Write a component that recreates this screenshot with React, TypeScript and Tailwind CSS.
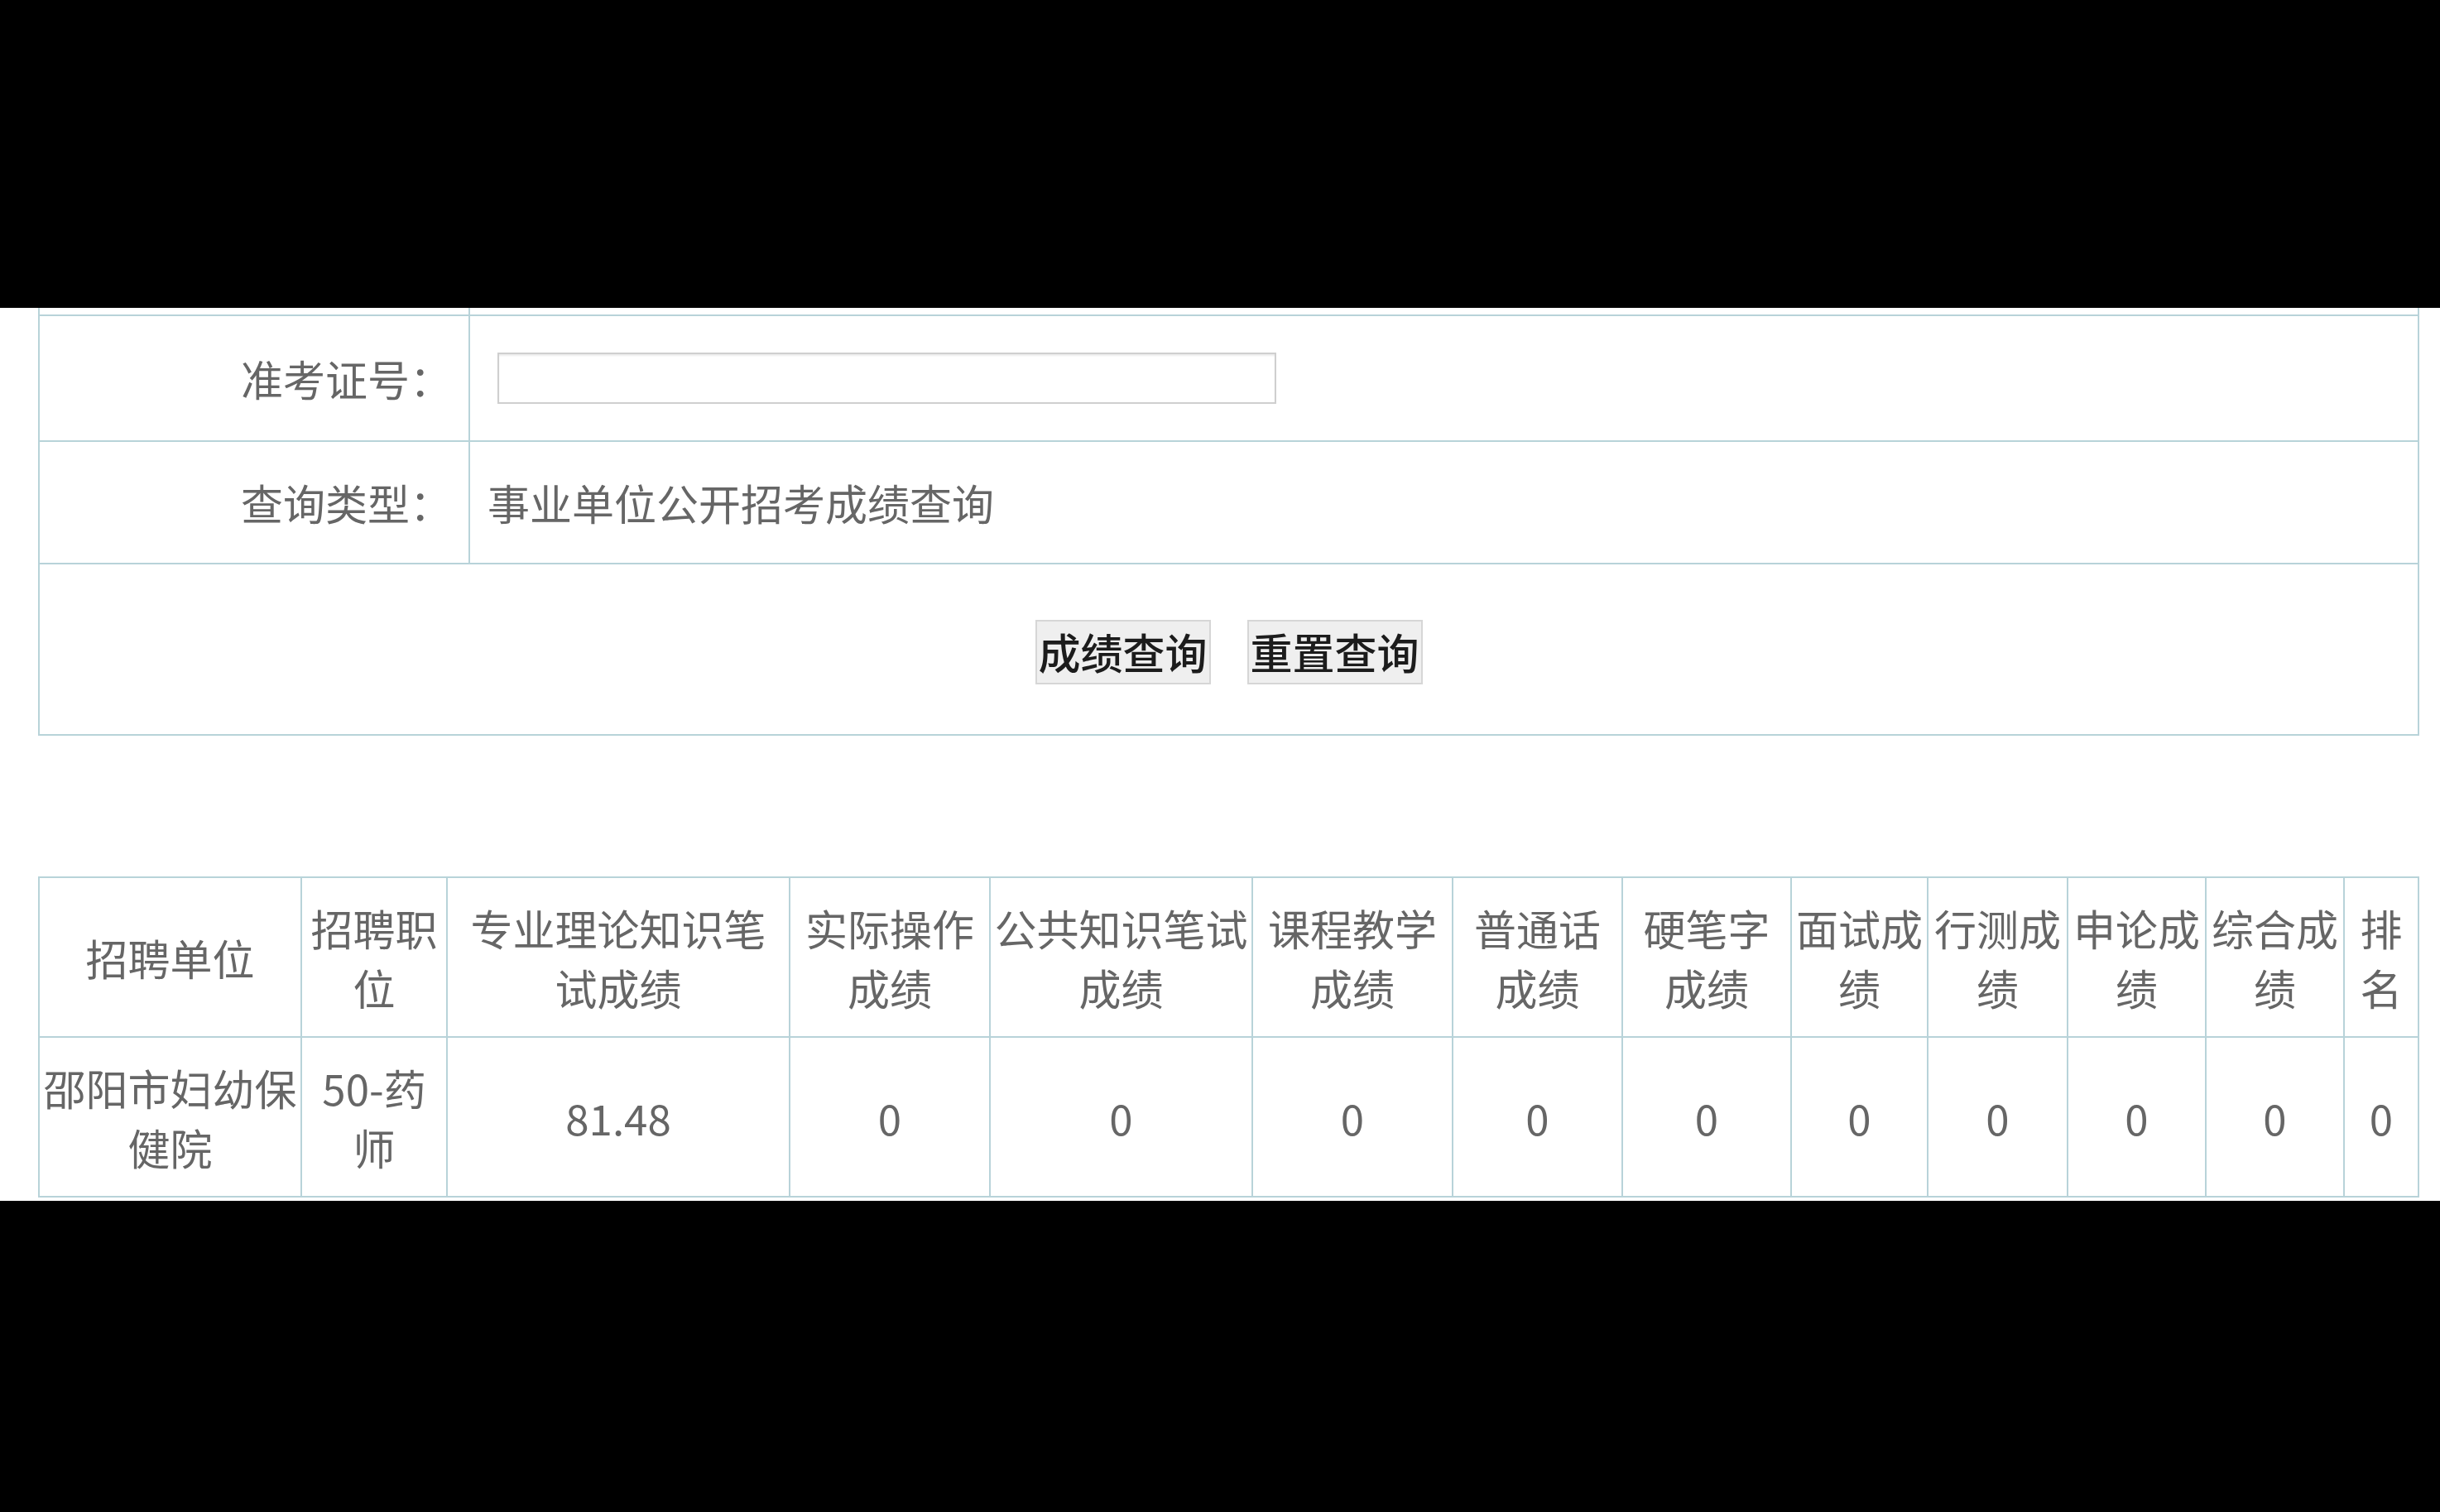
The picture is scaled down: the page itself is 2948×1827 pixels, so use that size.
const line = "border-[#b8d3d9]";

const headers: { lines: string[]; w: string }[] = [
  { lines: ["招聘单位"], w: "w-[317px]" },
  { lines: ["招聘职", "位"], w: "w-[176px]" },
  { lines: ["专业理论知识笔", "试成绩"], w: "w-[414px]" },
  { lines: ["实际操作", "成绩"], w: "w-[242px]" },
  { lines: ["公共知识笔试", "成绩"], w: "w-[317px]" },
  { lines: ["课程教学", "成绩"], w: "w-[242px]" },
  { lines: ["普通话", "成绩"], w: "w-[205px]" },
  { lines: ["硬笔字", "成绩"], w: "w-[204px]" },
  { lines: ["面试成", "绩"], w: "w-[165px]" },
  { lines: ["行测成", "绩"], w: "w-[169px]" },
  { lines: ["申论成", "绩"], w: "w-[167px]" },
  { lines: ["综合成", "绩"], w: "w-[167px]" },
  { lines: ["排", "名"], w: "w-[90px]" },
];

const values: string[][] = [
  ["邵阳市妇幼保", "健院"],
  ["50-药", "师"],
  ["81.48"],
  ["0"], ["0"], ["0"], ["0"], ["0"], ["0"], ["0"], ["0"], ["0"], ["0"],
];

function Cell({ lines, w }: { lines: string[]; w: string }) {
  return (
    <div className={`${w} h-[193px] shrink-0 border-r-2 border-b-2 ${line} flex flex-col items-center justify-center whitespace-nowrap`}>
      {lines.map((l, i) => (
        <span key={i} className="block leading-[72px]">{l}</span>
      ))}
    </div>
  );
}

export default function App() {
  return (
    <div
      className="w-[2948px] h-[1827px] bg-black flex flex-col text-[51px] text-[#666]"
      style={{ fontFamily: '"Noto Sans CJK SC", "Noto Sans", sans-serif' }}
    >
      <div className="h-[372px] shrink-0" />
      <div className="h-[1079px] shrink-0 bg-white pl-[46px]">
        {/* query form */}
        <div className={`w-[2877px] border-x-2 border-b-2 ${line}`}>
          <div className="flex h-[8px]">
            <div className={`w-[520px] border-r-2 ${line}`} />
          </div>
          <div className={`flex h-[152px] border-t-2 ${line}`}>
            <div className={`w-[520px] shrink-0 border-r-2 ${line} flex items-center justify-end pr-[20px]`}>
              准考证号：
            </div>
            <div className="flex items-center pl-[33px]">
              <input
                type="text"
                className="w-[941px] h-[62px] border-2 border-[#cfcfcf] shadow-[inset_0_2px_2px_rgba(0,0,0,0.08)] bg-white outline-none"
              />
            </div>
          </div>
          <div className={`flex h-[148px] border-t-2 ${line}`}>
            <div className={`w-[520px] shrink-0 border-r-2 ${line} flex items-center justify-end pr-[20px]`}>
              查询类型：
            </div>
            <div className="flex items-center pl-[21px]">事业单位公开招考成绩查询</div>
          </div>
          <div className={`flex h-[207px] border-t-2 ${line} items-center justify-center gap-[44px] pt-[6px]`}>
            <button className="w-[212px] h-[78px] bg-[#efefef] border-2 border-[#d6d6d6] text-[#1c1c1c] font-medium leading-none">
              成绩查询
            </button>
            <button className="w-[212px] h-[78px] bg-[#efefef] border-2 border-[#d6d6d6] text-[#1c1c1c] font-medium leading-none">
              重置查询
            </button>
          </div>
        </div>

        {/* score table */}
        <div className={`mt-[170px] w-[2877px] border-l-2 border-t-2 ${line}`}>
          <div className="flex">
            {headers.map((h, i) => (
              <Cell key={i} lines={h.lines} w={h.w} />
            ))}
          </div>
          <div className="flex">
            {values.map((v, i) => (
              <Cell key={i} lines={v} w={headers[i].w} />
            ))}
          </div>
        </div>
      </div>
    </div>
  );
}
